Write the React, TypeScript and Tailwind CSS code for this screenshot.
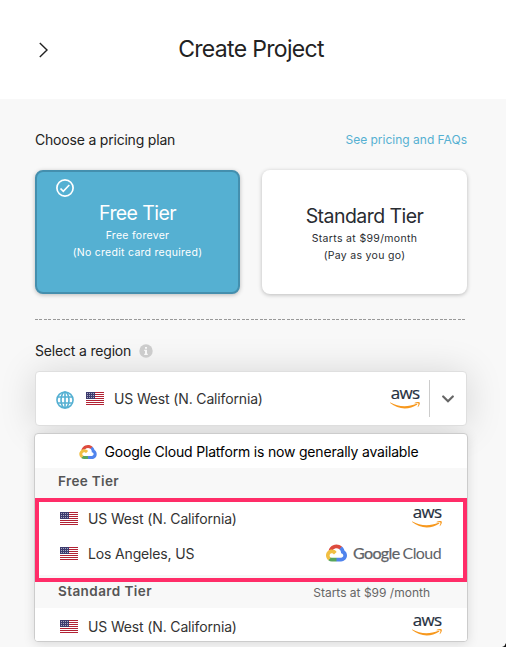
import React from "react";

function Flag() {
  return (
    <svg className="h-[13px] w-[18px] shrink-0" viewBox="0 0 18 13">
      <rect width="18" height="13" fill="#fff" />
      {[0, 2, 4, 6, 8, 10, 12].map((y) => (
        <rect key={y} y={y} width="18" height="1" fill="#b22234" />
      ))}
      <rect width="9" height="7" fill="#3c3b6e" />
      {[1, 3, 5].map((y) =>
        [1, 3, 5, 7].map((x) => (
          <circle key={`${x}-${y}`} cx={x + 0.5} cy={y + 0.5} r=".5" fill="#fff" opacity=".75" />
        ))
      )}
    </svg>
  );
}

function AwsLogo() {
  return (
    <div className="flex w-[30px] shrink-0 flex-col items-center">
      <span className="h-[13px] font-['Open_Sans',sans-serif] text-[17px] leading-[8px] font-medium tracking-[-0.7px] text-[#252f3e] [-webkit-text-stroke:0.2px_#252f3e]">
        aws
      </span>
      <svg className="h-[7px] w-[30px]" viewBox="0 0 30 7">
        <path d="M.4.6C7.8 4.9 17.8 5.5 26.5 1.8c.7-.3 1.2.4.5.9C19.5 7.900 8.300 7.900.1 1.100c-.3-.3 0-.7.3-.5z" fill="#f7981d" />
        <path d="M24.800.8C26.600-.2 29.300-.2 29.700.4c.4.6-.1 3.300-1.700 4.700-.3.200-.6.100-.4-.2.400-.9 1.100-2.900.8-3.300-.4-.5-2.400-.3-3.400-.1-.4.0-.5-.4-.2-.7z" fill="#f7981d" />
      </svg>
    </div>
  );
}

function CloudMark({ className }: { className: string }) {
  return (
    <svg className={className} viewBox="0 0 256 206">
      <path fill="#dd4b3e" d="M170.25 56.82l22.25-22.25 1.49-9.37C153.44-11.68 88.98-7.5 52.42 33.92 42.27 45.42 34.73 59.76 30.72 74.57l7.97-1.12 44.5-7.34 3.44-3.51c19.8-21.75 53.27-24.67 76.13-6.17z" />
      <path fill="#5084ed" d="M224.2 73.92C219.09 55.08 208.59 38.15 193.99 25.2l-31.23 31.23c13.18 10.77 20.7 27.01 20.37 44.04v5.54c15.36 0 27.8 12.45 27.8 27.8s-12.44 27.48-27.8 27.48h-55.67L122 167.22v33.34l5.46 5.23h55.67c39.93.31 72.56-31.49 72.87-71.42.19-24.2-11.75-46.89-31.8-60.45" />
      <path fill="#58a55c" d="M71.87 205.8h55.59v-44.51H71.87c-3.96 0-7.8-.85-11.4-2.5l-7.89 2.42-22.4 22.25-1.96 7.58c12.57 9.49 27.9 14.83 43.65 14.76" />
      <path fill="#f1bf42" d="M71.87 61.43C31.94 61.66-.24 94.23 0 134.16c.13 22.3 10.55 43.29 28.22 56.88l32.25-32.25c-13.99-6.32-20.21-22.79-13.89-36.78 6.32-13.99 22.79-20.2 36.78-13.88 6.16 2.78 11.1 7.72 13.89 13.88l32.24-32.24C115.77 71.83 94.45 61.34 71.87 61.43" />
    </svg>
  );
}

function GoogleCloudLogo() {
  return (
    <div className="mr-px flex shrink-0 items-center gap-[6px] pt-px font-['Lato',sans-serif] text-[16px] leading-none text-[#5f6368]">
      <CloudMark className="h-[18px] w-[21px]" />
      <span className="flex gap-[3px]">
        <span className="tracking-[-0.6px] [-webkit-text-stroke:0.25px_#5f6368]">Google</span>
        <span className="tracking-[-0.6px]">Cloud</span>
      </span>
    </div>
  );
}

function Region({ name, children }: { name: string; children: React.ReactNode }) {
  return (
    <div className="flex h-[35px] items-center justify-between bg-white pr-[25px] pl-[25px]">
      <div className="flex items-center gap-[10px] pt-[2px]">
        <Flag />
        <span className="text-[14px] tracking-[-0.15px] text-[#333]">{name}</span>
      </div>
      {children}
    </div>
  );
}

export default function App() {
  return (
    <div className="relative h-[647px] w-[506px] overflow-hidden bg-[#f8f8f8] font-['Inter',sans-serif] text-[#222]">
      <header className="relative flex h-[99px] items-center justify-center bg-white pr-1 pb-px">
        <svg className="absolute top-[42px] left-[38px] h-4 w-3" viewBox="0 0 12 16" fill="none" stroke="#222" strokeWidth="1.4">
          <path d="M1.800 1l7.200 7-7.200 7" />
        </svg>
        <h1 className="text-[23px] leading-[28px] tracking-[-0.68px]">Create Project</h1>
      </header>

      <main className="pr-[39px] pl-[35px]">
        <div className="flex h-[71px] items-center justify-between pt-[11px]">
          <span className="pb-[2px] text-[14px] tracking-[-0.2px]">Choose a pricing plan</span>
          <a className="text-[12px] text-[#55b0d2]">See pricing and FAQs</a>
        </div>

        <div className="flex justify-between">
          <div className="relative flex h-[124px] w-[205px] flex-col items-center rounded-lg border-2 border-[#448fae] bg-[#55b0d2] pt-[27px] text-white shadow-[0_1px_4px_rgba(0,0,0,0.25)]">
            <svg className="absolute top-[7px] left-[19px] size-[18px]" viewBox="0 0 18 18" fill="none" stroke="white" strokeWidth="1.700">
              <circle cx="9" cy="9" r="8.100" />
              <path d="M4.500 9.500l2.800 2.800 6-6.300" />
            </svg>
            <h2 className="text-[19.5px] leading-[28px] tracking-[-0.6px]">Free Tier</h2>
            <p className="text-[10.5px] leading-[17px] tracking-[0.28px]">Free forever</p>
            <p className="text-[10.5px] leading-[17px] tracking-[0.28px]">(No credit card required)</p>
          </div>
          <div className="flex h-[124px] w-[205px] flex-col items-center rounded-lg bg-white pt-[32px] text-[#292c31] shadow-[0_1px_4px_rgba(0,0,0,0.25)]">
            <h2 className="text-[19.5px] leading-[28px] tracking-[-0.55px]">Standard Tier</h2>
            <p className="text-[10.5px] leading-[17px] tracking-[0.34px]">Starts at $99/month</p>
            <p className="text-[10.5px] leading-[17px] tracking-[0.3px]">(Pay as you go)</p>
          </div>
        </div>

        <div className="mt-[25px] h-px bg-[repeating-linear-gradient(90deg,#999_0_3px,transparent_3px_4.5px)]" />

        <div className="flex h-[51px] items-center gap-[8px] pt-[9px]">
          <span className="text-[14px] tracking-[-0.18px]">Select a region</span>
          <svg className="mt-px size-[14px]" viewBox="0 0 14 14">
            <circle cx="7" cy="7" r="6.700" fill="#ccc" />
            <path d="M6 3h2v1.800H6zM5.200 5.800H8v3.900h.8V11H5.200V9.700H6V7h-.8z" fill="#f8f8f8" />
          </svg>
        </div>

        <div className="flex h-[55px] items-center rounded-[4px] border border-[#dfdfdf] bg-white pl-5 shadow-[0_2px_36px_rgba(0,0,0,0.15)]">
          <svg className="mt-[2px] size-[18px]" viewBox="0 0 19 19" fill="none" stroke="#55b0d2" strokeWidth="1.700">
            <circle cx="9.500" cy="9.500" r="8.500" />
            <ellipse cx="9.500" cy="9.500" rx="4.200" ry="8.500" />
            <path d="M9.500 1v17M1.800 6.300h15.400M1.800 12.700h15.400" />
          </svg>
          <div className="ml-[12px] flex items-center gap-[10px]">
            <Flag />
            <span className="text-[14px] tracking-[-0.15px] text-[#333]">US West (N. California)</span>
          </div>
          <div className="ml-auto flex items-center">
            <AwsLogo />
            <div className="ml-[9px] h-[37px] w-px bg-[#ccc]" />
            <svg className="mx-[12px] h-[8px] w-3" viewBox="0 0 12 8" fill="none" stroke="#666" strokeWidth="2.200" strokeLinecap="round">
              <path d="M1.200 1.500l4.800 4.700 4.800-4.700" />
            </svg>
          </div>
        </div>

        <div className="relative mx-[-1px] mt-[7px] h-[209px] overflow-hidden rounded-[4px] border border-[#ccc] bg-white shadow-[0_2px_12px_rgba(0,0,0,0.12)]">
          <div className="flex h-[34px] items-center justify-center gap-2 pt-[2px] pr-[5px] text-[14px] tracking-[-0.19px] text-black">
            <CloudMark className="h-[14px] w-[18px]" />
            <span className="pb-px">Google Cloud Platform is now generally available</span>
          </div>
          <div className="flex h-[32px] items-center bg-[#f8f8f8] pb-[5px] pl-[23px] text-[13.5px] font-semibold tracking-[0.35px] text-[#555]">
            Free Tier
          </div>
          <Region name="US West (N. California)"><AwsLogo /></Region>
          <Region name="Los Angeles, US"><GoogleCloudLogo /></Region>
          <div className="mt-[5px] flex h-[33px] items-center justify-between bg-[#f8f8f8] pr-[37px] pl-[23px]">
            <span className="text-[13.5px] font-semibold tracking-[0.42px] text-[#555]">Standard Tier</span>
            <span className="pt-[3px] text-[12px] text-[#666]">Starts at $99 /month</span>
          </div>
          <Region name="US West (N. California)"><AwsLogo /></Region>
          <div className="absolute top-[64px] right-0 left-0 h-[84px] border-4 border-[#ff2d68]" />
        </div>
      </main>
      <svg className="absolute right-0 bottom-0 size-[4px]" viewBox="0 0 5 5">
        <path d="M5 0v5H0Q4 4 5 0z" fill="#111" />
      </svg>
    </div>
  );
}
